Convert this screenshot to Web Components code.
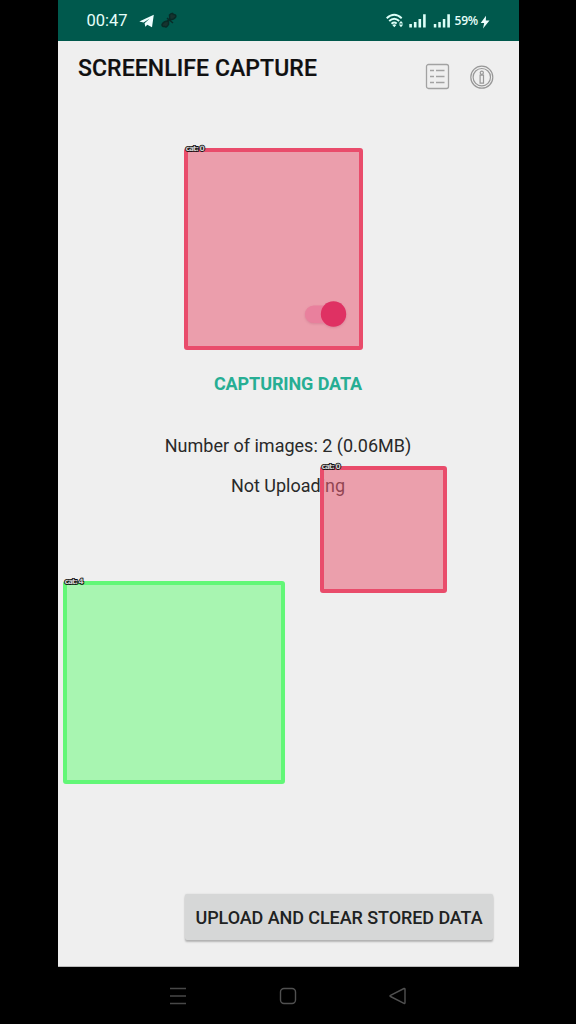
<!DOCTYPE html>
<html lang="en"><head><meta charset="utf-8"><title>Screenlife Capture</title>
<style>html,body{margin:0;height:100%;background:#000;overflow:hidden}</style></head>
<body><capture-app></capture-app>
<script>
const define=(name,html)=>customElements.define(name,class extends HTMLElement{
  constructor(){super();this.attachShadow({mode:'open'}).innerHTML=html;}
});
define('status-bar',`<style>
:host{display:flex;height:41px;box-sizing:border-box;background:#00594d;color:#e6fffa;align-items:center;padding:0 28px 0 29px;font-size:16.5px}
svg{display:block;flex:none}.grow{flex:1}.time{width:52px;white-space:nowrap}
.pct{font:600 12px "Open Sans",sans-serif;letter-spacing:-.2px;width:24px;white-space:nowrap}
</style>
<span class="time">00:47</span>
<svg width="16" height="14" viewBox="0 0 16 14"><path fill="#efffff" d="M.3 7.400 14.800.8 13 13.200 8.300 10.800 6.300 12.800 5.600 9.200 10.800 4.500 4.500 8.600Z"/></svg>
<svg style="margin-left:6px" width="17" height="17" viewBox="0 0 17 17"><g fill="#17332f" stroke="#082b27" stroke-width="1.500"><path d="M8.500 3q3-3 3.800-.5 3-.2 2.500 2.300-2 3-6 3zM7.500 9q-5 0-6.500 3.500 0 2.500 2.500 2 2 1.500 4-2z"/><path d="m6 6 6 5M6 8.500l4-1" fill="none"/></g></svg>
<span class="grow"></span>
<svg width="18" height="16" viewBox="0 0 18 16"><g fill="none" stroke="#dcfff8" stroke-width="1.900"><path d="M.7 5.200Q8.200-1.700 15.700 5.200M3.200 8Q8.200 3.300 13.200 8M5.500 10.700q2.700-2.200 5.200-.2"/></g><path fill="#dcfff8" d="m8.300 14.300-2-2.400q2-1.500 4 0zM15 8l2.200 2.600h-4.400zM15 14.200l2.200-2.600h-4.400z"/></svg>
<svg style="margin-left:5px" width="18" height="14" viewBox="0 0 18 14"><path fill="#dcfff8" d="M.3 10h2.600v3.500H.3zM4.900 8h2.600v5.500H4.900zM9.500 5h2.600v8.500H9.500zM14.100.3h2.600v13.200h-2.600z"/></svg>
<svg style="margin-left:6px;margin-right:4px" width="18" height="14" viewBox="0 0 18 14"><path fill="#dcfff8" d="M.8 10h2.500v3.500H.8zM5.300 8h2.500v5.500H5.300zM9.800 5h2.500v8.500H9.800zM14.300.3h2.600v13.200h-2.600z"/></svg>
<span class="pct">59%</span>
<svg style="margin-left:1px;margin-right:1px;position:relative;top:1px" width="10" height="14" viewBox="0 0 10 14"><path fill="#efffff" d="M6 .8.700 8h3.500L3 13.500 9.500 5.500H5.800z"/></svg>`);
define('app-header',`<style>
:host{display:flex;height:68px;padding:14px 25px 0 20.500px;box-sizing:border-box;justify-content:space-between}
h1{margin:0;font:500 23px/28px Roboto,sans-serif;letter-spacing:.08px;color:#101010;white-space:nowrap;-webkit-text-stroke:.2px #101010}
.icons{display:flex;gap:19px;padding-top:8px}svg{display:block}
</style><h1>SCREENLIFE CAPTURE</h1><div class="icons">
<svg width="25" height="27" viewBox="0 0 25 27" fill="none" stroke="#a2a2a2" stroke-width="1.300"><rect x="1.500" y="1.500" width="22" height="24" rx="2"/><path stroke-width="1.600" d="M5 7.500h4m2 0h8.500M5 13.500h4m2 0h8.500M5 19.500h4m2 0h8.500"/></svg>
<svg width="25" height="27" viewBox="0 0 25 27" fill="none" stroke="#989898" stroke-width="1.200"><circle cx="12.800" cy="14.200" r="11"/><circle cx="12.800" cy="14.200" r="8.700"/><circle cx="12.800" cy="9.700" r="1.600"/><path d="M11.100 12.200h3.400v8h-3.400z"/></svg></div>`);
define('toggle-switch',`<style>:host{display:block;width:42px;height:26px}svg{display:block;overflow:visible;filter:drop-shadow(0 1px 1px #a03c6040)}</style>
<svg width="42" height="26"><rect x="0" y="4.500" width="37" height="17.500" rx="8.750" fill="#e9809d"/><circle cx="28.500" cy="13" r="12.700" fill="#df3163"/></svg>`);
define('action-button',`<style>:host{display:block}button{display:block;width:308px;height:46px;border:0;border-radius:2px;padding:0;background:#d6d7d7;color:#202222;font:500 18px/47px Roboto,sans-serif;letter-spacing:-.08px;white-space:nowrap;box-shadow:0 2px 2px #0000003d,0 0 2px #0000001c}</style><button><slot></slot></button>`);
define('region-box',`<style>
:host{position:absolute;display:block;box-sizing:border-box;border:4px solid var(--line);border-radius:3px;background:var(--fill);background-clip:padding-box}
span{position:absolute;left:-2.500px;top:-7px;font:700 7.500px/8px "DejaVu Sans",sans-serif;letter-spacing:-.95px;color:#ccc;-webkit-text-stroke:1.600px #111;paint-order:stroke;white-space:nowrap}
</style><span><slot></slot></span>`);
define('nav-bar',`<style>:host{display:flex;height:57px;align-items:center;justify-content:center;gap:90px}svg{display:block}</style>
<svg width="20" height="20" fill="none" stroke="#484848" stroke-width="1.400"><path d="M2 2.500h16M2 10h16M2 17.500h16"/></svg>
<svg width="20" height="20" fill="none" stroke="#505050" stroke-width="1.400"><rect x="2.500" y="2.500" width="15" height="15" rx="3.500"/></svg>
<svg width="20" height="20" fill="none" stroke="#505050" stroke-width="1.400"><path stroke-linejoin="round" d="M2.500 9.300 16 2.500q1-.3 1 .7v13.600q0 1-1 .5L2.500 10.500q-1-.6 0-1.200"/></svg>`);
define('capture-app',`<style>
:host{display:flex;flex-direction:column;position:relative;width:461px;height:1024px;margin-left:57.500px;font-family:Roboto,sans-serif}
main{height:926px;background:#efefef;display:flex;flex-direction:column;border-bottom:1px solid #bbb;box-sizing:border-box}
.switch{display:flex;justify-content:flex-end;padding:192px 171.500px 0 0}
toggle-switch{position:relative;z-index:2}
.state{text-align:center;color:#27ae94;font-weight:700;font-size:18px;letter-spacing:-.1px;line-height:24px;margin-top:45px}
.info{text-align:center;color:#292929;font-size:18px;line-height:24px;margin-top:38px}
.info+.info{margin-top:15.500px}
footer{margin-top:auto;display:flex;justify-content:flex-end;padding:0 25.500px 26px 0}
</style><status-bar></status-bar><main><app-header></app-header>
<div class="switch"><toggle-switch></toggle-switch></div>
<div class="state">CAPTURING DATA</div><div class="info">Number of images: 2 (0.06MB)</div><div class="info">Not Uploading</div>
<footer><action-button>UPLOAD AND CLEAR STORED DATA</action-button></footer></main><nav-bar></nav-bar>
<region-box style="left:126.500px;top:148px;width:179px;height:202px;--line:#e94c6b;--fill:#eb9eac">cat: 0</region-box>
<region-box style="left:262.500px;top:465.500px;width:127px;height:127px;--line:#e94c6b;--fill:#e85c758c">cat: 0</region-box>
<region-box style="left:5.500px;top:581px;width:222px;height:203px;--line:#62f777;--fill:#a8f5b1">cat: 4</region-box>`);
</script></body></html>
